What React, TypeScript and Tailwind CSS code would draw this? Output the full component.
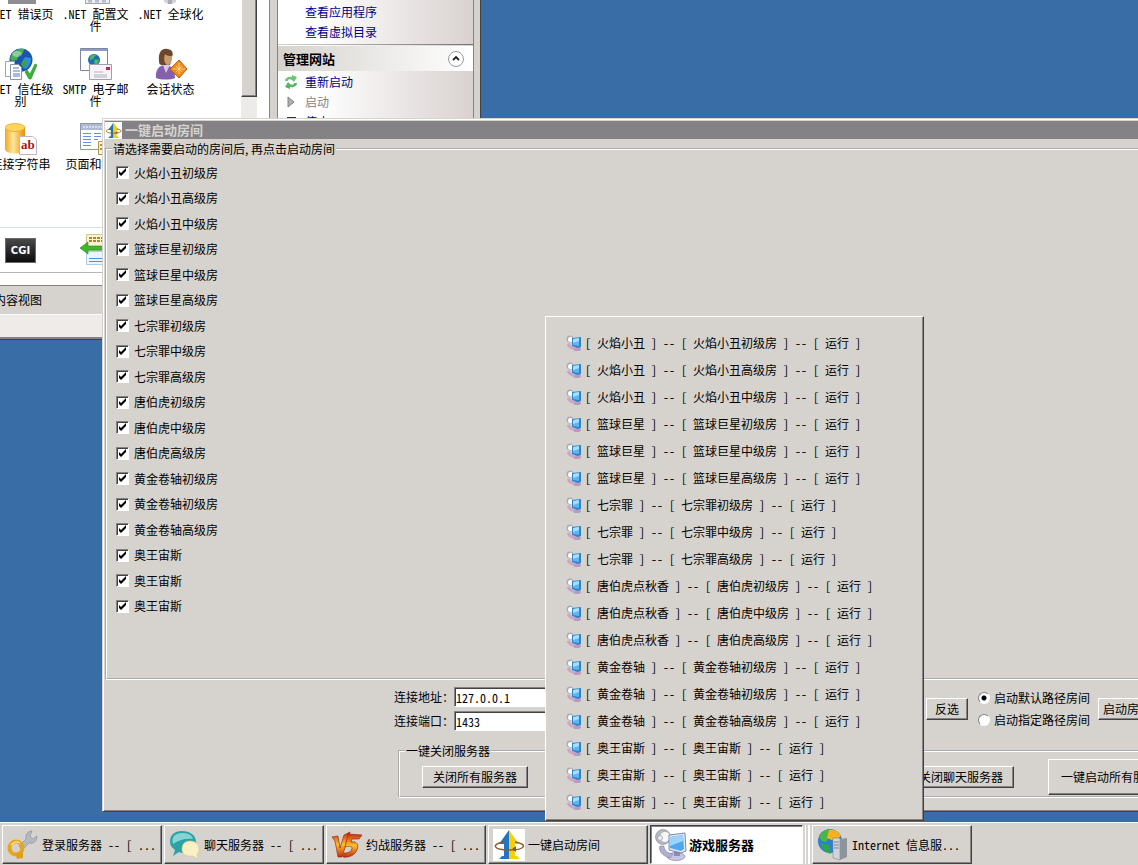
import React from "react";

const rooms = [
  "火焰小丑初级房",
  "火焰小丑高级房",
  "火焰小丑中级房",
  "篮球巨星初级房",
  "篮球巨星中级房",
  "篮球巨星高级房",
  "七宗罪初级房",
  "七宗罪中级房",
  "七宗罪高级房",
  "唐伯虎初级房",
  "唐伯虎中级房",
  "唐伯虎高级房",
  "黄金卷轴初级房",
  "黄金卷轴初级房",
  "黄金卷轴高级房",
  "奥王宙斯",
  "奥王宙斯",
  "奥王宙斯",
];

const running = [
  ["火焰小丑", "火焰小丑初级房"],
  ["火焰小丑", "火焰小丑高级房"],
  ["火焰小丑", "火焰小丑中级房"],
  ["篮球巨星", "篮球巨星初级房"],
  ["篮球巨星", "篮球巨星中级房"],
  ["篮球巨星", "篮球巨星高级房"],
  ["七宗罪", "七宗罪初级房"],
  ["七宗罪", "七宗罪中级房"],
  ["七宗罪", "七宗罪高级房"],
  ["唐伯虎点秋香", "唐伯虎初级房"],
  ["唐伯虎点秋香", "唐伯虎中级房"],
  ["唐伯虎点秋香", "唐伯虎高级房"],
  ["黄金卷轴", "黄金卷轴初级房"],
  ["黄金卷轴", "黄金卷轴初级房"],
  ["黄金卷轴", "黄金卷轴高级房"],
  ["奥王宙斯", "奥王宙斯"],
  ["奥王宙斯", "奥王宙斯"],
  ["奥王宙斯", "奥王宙斯"],
];

/* Icons */

const TrustIcon = () => (
  <svg viewBox="0 0 32 32" className="size-8">
    <circle cx="16" cy="12" r="11.500" fill="#1a56b0" />
    <path d="M8 5c3-4 8-5 11-4l-1 4-4 2-2 5-5 1-2-3z" fill="#47b04b" />
    <path d="M20 9l6 1c0 5-2 9-6 11l-3-4 1-5z" fill="#2f8fd6" />
    <path d="M18 12l4 1-1 5-3 2-2-4z" fill="#3d9f4a" />
    <ellipse cx="12" cy="6" rx="5" ry="3" fill="#fff" opacity=".4" />
    <path d="M.5 13.500h9v15h-9z" fill="#fff" stroke="#9ba4b5" />
    <path d="M5.500 16.500h8l3 3v12h-11z" fill="#fff" stroke="#8a94a8" />
    <path d="M8 20h6M8 23h7M8 26h7M8 28h7" stroke="#4a78c8" />
    <path d="M20 24l2-2 3 4 5-10 2 1-6 14h-2z" fill="#39b536" stroke="#1d8a1f" strokeWidth=".6" />
  </svg>
);

const MailIcon = () => (
  <svg viewBox="0 0 32 32" className="size-8">
    <path d="M.5.5h27v22H.5z" fill="#fff" stroke="#7d86a5" />
    <path d="M1 1h26v2H1z" fill="#8f9cc4" />
    <circle cx="14" cy="12" r="6" fill="#1f6cb8" />
    <path d="M10 9c2-3 5-3 6-2l-3 4-3 1zM15 11l4 1-2 5-3-2z" fill="#4cbb5a" />
    <path d="M9.500 16.500h22v15h-22z" fill="#f6f4f7" stroke="#a19db0" />
    <path d="M26 19h4v3h-4z" fill="#c02252" />
    <path d="M14 24h9M14 27h13M14 29h13" stroke="#b4aec0" />
  </svg>
);

const SessionIcon = () => (
  <svg viewBox="0 0 32 32" className="size-8">
    <path d="M1 30c-1-9 4-13 9-13s10 3 10 13c-4 2-14 2-19 0z" fill="#8560ae" />
    <path d="M8 17l3 8 4-8z" fill="#d7c7ea" />
    <path d="M4 13C3 3 8 0 12 1c5 0 7 4 5 8l-2 8H7c-2 0-3-1-3-4z" fill="#6b482c" />
    <path d="M10 6c2 2 5 2 7 2 0 5-1 9-4 9s-5-5-3-11z" fill="#c99b70" />
    <path d="M24 12l8 9-8 9-9-9z" fill="#f08a1b" stroke="#b85c08" />
    <path d="M24 15v11M18 21h12M21 18l6 6M27 18l-6 6" stroke="#ffdf9b" strokeWidth=".8" />
  </svg>
);

const DatabaseIcon = () => (
  <svg viewBox="0 0 32 32" className="size-8">
    <defs>
      <linearGradient id="db">
        <stop stopColor="#f3a51a" />
        <stop offset=".4" stopColor="#ffe79c" />
        <stop offset="1" stopColor="#e39009" />
      </linearGradient>
    </defs>
    <path d="M0 4v22c0 6 20 6 20 0V4z" fill="url(#db)" />
    <ellipse cx="10" cy="4.500" rx="10" ry="4" fill="#ffd45a" stroke="#e19a16" strokeWidth=".6" />
    <path d="M14.500 13.500h13l4 3v15h-17z" fill="#fff" stroke="#c3b4bb" />
    <text x="16" y="26" className="font-['Liberation_Serif',serif] text-[13px] font-bold" fill="#a01818">ab</text>
  </svg>
);

const PageIcon = () => (
  <svg viewBox="0 0 32 32" className="size-8">
    <path d="M.5.5h31v26H.5z" fill="#fff" stroke="#8b97ad" />
    <path d="M1 1h30v6H1z" fill="#aebbd2" />
    <path d="M3 4h20" stroke="#fff" strokeDasharray="2 1" />
    <path d="M3 10.500h8M3 13.500h8M3 16.500h8M3 19.500h8M3 22.500h8M14 10.500h7M14 13.500h7M14 16.500h4" stroke="#6b8fd4" />
    <path d="M18.500 18.500h13v13h-13z" fill="#fbf3d0" stroke="#b29245" />
    <path d="M20 22h6M20 26h6" stroke="#b29245" strokeWidth="2" />
  </svg>
);

const FilterIcon = () => (
  <svg viewBox="0 0 32 32" className="size-8">
    <path d="M6.500.5h25v16h-25z" fill="#fcf4cf" stroke="#d7c485" />
    <path d="M9 4h18M9 7h18" stroke="#a8863c" strokeWidth="2" strokeDasharray="3 1" />
    <path d="M6.500 17.500h25v13h-25z" fill="#eaf5ff" stroke="#a9cbea" />
    <path d="M9 24.500h20M9 27.500h20" stroke="#4f91d6" />
    <path d="M0 14l8-6v4h15v4H8v4z" fill="#41b52f" stroke="#228a1c" strokeWidth=".6" />
  </svg>
);

const SheetIcon = () => (
  <svg viewBox="0 0 32 32" className="size-8">
    <path d="M5.500 4.500h24v26h-24z" fill="#eceef2" stroke="#a0a3ad" />
    <path d="M8 28h4M15 28h4M22 28h4" stroke="#b9bdc9" strokeWidth="3" />
  </svg>
);

const PlateIcon = () => (
  <svg viewBox="0 0 32 32" className="size-8">
    <path d="M3 20h28v11H3z" fill="#8f8d93" />
  </svg>
);

const StandIcon = () => (
  <svg viewBox="0 0 32 32" className="size-8">
    <path d="M9 24h12v5l-4 2h-4l-4-2z" fill="#d3d2d8" />
    <path d="M13 24h4v7h-4z" fill="#adabb5" />
  </svg>
);

const RestartIcon = () => (
  <svg viewBox="0 0 16 16" className="size-4">
    <path d="M2 7c0-3 4-5 7-4V1l5 2-3 5-2-2C7 5 5 5 5 7z" fill="#6cc474" />
    <path d="M14 9c0 3-4 5-7 4v2l-5-2 3-5 2 2c2 1 4 1 4-1z" fill="#58b562" />
  </svg>
);

const ServerIcon = () => (
  <svg viewBox="0 0 32 32" className="size-8">
    <ellipse cx="21" cy="27.500" rx="9" ry="4" fill="#c9c5e6" stroke="#77739f" strokeWidth=".6" />
    <path d="M19 22h6v5h-6z" fill="#8f8bb8" />
    <path d="M5 17c-2 4 2 10 10 12l3-4c-6-1-9-4-9-8z" fill="#b3aed0" stroke="#8580a8" strokeWidth=".6" />
    <circle cx="8" cy="8" r="7.500" fill="#b4b8c1" stroke="#7f848f" strokeWidth=".6" />
    <circle cx="10" cy="8" r="5" fill="#f5f7fa" />
    <circle cx="5" cy="9" r="2.500" fill="#e9ebf0" stroke="#8c92a0" strokeWidth=".6" />
    <path d="M14 6l16-2 1 18-5 2-12-3z" fill="#dfe7f3" stroke="#5d7196" strokeWidth=".8" />
    <path d="M15 8l13-2 1 14-3 2-11-3z" fill="#52a7ea" />
    <path d="M15 8l13-2v6l-13 5z" fill="#9bd3fa" />
  </svg>
);

const RoomIcon = () => (
  <svg viewBox="0 0 16 16" className="size-4">
    <ellipse cx="11" cy="14" rx="4" ry="2" fill="#b79bc4" />
    <path d="M1 9c0 3 3 5 7 6l1-3c-3 0-5-2-5-4z" fill="#cba9c6" />
    <circle cx="4" cy="4" r="3.500" fill="#a7adba" />
    <circle cx="4.500" cy="4.500" r="2.500" fill="#fff" />
    <path d="M6 3l9-1v10l-3 1-6-2z" fill="#2f83c9" />
    <path d="M7 4l6-1v8l-6-1z" fill="#5fb6ee" />
    <path d="M7 4l6-1v3L7 8z" fill="#a9defb" />
  </svg>
);

const ArrowsIcon = ({ className }: { className: string }) => (
  <svg viewBox="0 0 32 32" className={className}>
    <path d="M0 0h32v32H0z" fill="#fff" />
    <path d="M16 1v29H6l3-3h2V15H6z" fill="#2376bd" />
    <path d="M16 1l10 14h-4v12h2l3 3H16z" fill="#f4cf13" />
    <path d="M10 13c-11 2-11 8 6 8s19-6 6-8" fill="none" stroke="#8a5a2a" strokeWidth="1.500" />
    <path d="M19 20l4-3v6z" fill="#8a5a2a" />
  </svg>
);

const WrenchIcon = () => (
  <svg viewBox="0 0 32 32" className="size-8">
    <path d="M12 17L19 10c-1-5 2-8 6-8l-2 5 3 3 4-3c0 6-4 8-8 7l-7 7z" fill="#b5b8bf" stroke="#858992" strokeWidth=".6" />
    <circle cx="9" cy="19" r="6.500" fill="none" stroke="#e6a61f" strokeWidth="4" />
    <path d="M8 24l8-1v6l-6 1z" fill="#e0a01b" />
    <path d="M4 16c2-3 6-4 9-2" fill="none" stroke="#ffe08a" strokeWidth="1.500" />
  </svg>
);

const ChatIcon = () => (
  <svg viewBox="0 0 32 32" className="size-8">
    <path d="M13 2c8 0 14 4 14 11s-6 11-14 11l-3-1-6 4 2-6c-3-2-5-5-5-8C1 6 5 2 13 2z" fill="#2ba3a5" />
    <path d="M13 4c6 0 10 2 11 6-8-1-14 1-20 5C2 8 6 4 13 4z" fill="#86d4d3" />
    <path d="M21 12c5 0 9 3 9 8 0 3-1 4-2 5l1 5-5-3c-7 1-11-2-11-7s3-8 8-8z" fill="#fbf0c4" stroke="#d9c78a" strokeWidth=".6" />
  </svg>
);

const VersusIcon = () => (
  <svg viewBox="0 0 32 32" className="size-8">
    <defs>
      <linearGradient id="fire" x2="0" y2="1">
        <stop stopColor="#c9300f" />
        <stop offset=".5" stopColor="#fbc02a" />
        <stop offset="1" stopColor="#c0300c" />
      </linearGradient>
    </defs>
    <path d="M1 8l6-1 2 12 4-13 6-3-8 25H7L4 12z" fill="url(#fire)" stroke="#8c1a0a" strokeWidth=".6" />
    <path d="M17 5l14 1-3 4h-7l-1 3c6-1 8 3 6 8-2 5-8 8-14 7l1-4c5 0 8-2 8-5 0-2-4-2-7-1z" fill="url(#fire)" stroke="#8c1a0a" strokeWidth=".6" />
  </svg>
);

const IisIcon = () => (
  <svg viewBox="0 0 32 32" className="size-8">
    <circle cx="13" cy="12" r="12" fill="#2f7fd0" />
    <path d="M2 8C5 1 10 0 15 1l-2 6-4 6-4-1z" fill="#49b54a" />
    <path d="M12 1c6-1 10 2 12 6l-7 5-7-3z" fill="#f7b21c" />
    <path d="M4 14l8 2 2 9C8 23 4 20 4 14z" fill="#2fa64d" />
    <path d="M16 9h7v22l-7-2z" fill="#cfd4da" stroke="#7e858e" strokeWidth=".6" />
    <path d="M23 10l7-1v19l-7 3z" fill="#8d949c" />
    <path d="M17 13h5M17 16h5M17 19h5" stroke="#7e858e" />
  </svg>
);

/* Shared controls */

interface PushButtonProps {
  children: React.ReactNode;
  className?: string;
}

const PushButton: React.FC<PushButtonProps> = ({ children, className = "" }) => (
  <button
    type="button"
    className={`shrink-0 whitespace-nowrap border border-t-white border-l-white border-r-[#424142] border-b-[#424142] shadow-[inset_-1px_-1px_0_#848284] ${className}`}
  >
    {children}
  </button>
);

const CheckItem = ({ id, label }: { id: string; label: string }) => (
  <li className="flex items-center gap-[5px] odd:h-[25px] even:h-[26px]">
    <span className="grid">
      <input
        id={id}
        type="checkbox"
        defaultChecked
        className="peer col-start-1 row-start-1 size-[13px] appearance-none border border-t-[#848284] border-l-[#848284] border-r-white border-b-white bg-white shadow-[inset_1px_1px_0_#424142]"
      />
      <svg viewBox="0 0 13 13" className="pointer-events-none invisible col-start-1 row-start-1 size-[13px] peer-checked:visible">
        <path d="M3 5l2 2 5-5v3L5 10 3 8z" fill="#000" />
      </svg>
    </span>
    <label htmlFor={id}>{label}</label>
  </li>
);

const RadioItem = ({ id, label, checked = false }: { id: string; label: string; checked?: boolean }) => (
  <div className="flex h-[22px] items-center gap-1">
    <input
      id={id}
      type="radio"
      name="path"
      defaultChecked={checked}
      className="size-3 appearance-none rounded-full border border-t-[#848284] border-l-[#848284] border-r-white border-b-white bg-white checked:bg-[radial-gradient(#000_2px,#fff_3px)]"
    />
    <label htmlFor={id} className="whitespace-nowrap">{label}</label>
  </div>
);

/* IIS manager, partly off the top left of the desktop */

const features = [
  { label: ".NET 错误页", icon: <PlateIcon /> },
  { label: ".NET 配置文件", icon: <SheetIcon /> },
  { label: ".NET 全球化", icon: <StandIcon /> },
  { label: ".NET 信任级别", icon: <TrustIcon /> },
  { label: "SMTP 电子邮件", icon: <MailIcon /> },
  { label: "会话状态", icon: <SessionIcon /> },
  { label: "连接字符串", icon: <DatabaseIcon /> },
  { label: "页面和控件", icon: <PageIcon /> },
];

const IisWindow = () => (
  <section className="absolute -top-[27px] -left-[17px] flex w-[498px] flex-col border-r border-b border-[#424142] bg-[#d6d3ce]">
    <div className="flex h-[312px]">
      <div className="flex w-[258px] flex-col bg-white">
        <ul className="grid grid-cols-[repeat(3,75px)] auto-rows-[75px]">
          {features.map((f) => (
            <li key={f.label} className="flex flex-col items-center gap-[3px]">
              {f.icon}
              <span className="w-[72px] text-center leading-3 break-all">{f.label}</span>
            </li>
          ))}
        </ul>
        <div className="mt-[29px] flex h-[46px] items-center gap-[44px] border-t border-b border-t-[#d2ddec] border-b-[#b8b5b1] pl-[22px]">
          <span className="flex h-[25px] w-[31px] items-center justify-center border border-[#6b6b6b] bg-linear-to-b from-[#4a4a4a] to-[#0d0d0d] font-['DejaVu_Sans',sans-serif] text-[10px] font-bold text-white">
            CGI
          </span>
          <FilterIcon />
        </div>
      </div>
      <div className="w-4 bg-[#ecebe8]">
        <div className="h-[124px] border-r border-b border-l border-r-[#424142] border-b-[#424142] border-l-white bg-[#d6d3ce] shadow-[inset_-1px_-1px_0_#848284]" />
      </div>
      <div className="w-[13px] border-r border-[#848284] bg-white" />
      <div className="w-2 border-r border-[#848284]" />
      <div className="flex w-[196px] flex-col border-r border-[#848284] bg-linear-to-r from-white from-20% to-[#d9d2d0] pt-[29px]">
        <a href="#apps" className="pl-[27px] leading-5 text-[#000084]">查看应用程序</a>
        <a href="#dirs" className="pl-[27px] leading-5 text-[#000084]">查看虚拟目录</a>
        <div className="mt-[2px] h-px bg-linear-to-r from-[#d6d3ce] to-[#737173]" />
        <div className="mt-px flex h-[25px] items-center justify-between bg-linear-to-r from-[#d6d3ce] to-white pr-[9px] pl-[5px]">
          <h2 className="text-[13px] font-bold">管理网站</h2>
          <button type="button" aria-label="折叠" className="flex size-4 items-center justify-center rounded-full border border-[#9a98a4] bg-white">
            <svg viewBox="0 0 10 10" className="size-[10px]">
              <path d="M2 6l3-3 3 3" fill="none" stroke="#222" strokeWidth="1.800" />
            </svg>
          </button>
        </div>
        <a href="#restart" className="mt-px flex items-center gap-[6px] pl-[5px] leading-5 text-[#000084]">
          <RestartIcon />
          重新启动
        </a>
        <span className="flex items-center gap-[6px] pl-[5px] leading-5 text-[#848284]">
          <svg viewBox="0 0 16 16" className="size-4">
            <path d="M5 3l6 5-6 5z" fill="#b0aeb0" stroke="#848284" />
          </svg>
          启动
        </span>
        <a href="#stop" className="flex items-center gap-[6px] pl-[5px] leading-5 text-[#000084]">
          <svg viewBox="0 0 16 16" className="size-4">
            <path d="M4 3h9v9H4z" fill="#303048" />
          </svg>
          停止
        </a>
      </div>
    </div>
    <div className="flex h-[29px] items-center border-t border-[#848284] pb-px pl-[11px]">内容视图</div>
    <div className="h-[25px] border-t border-b-2 border-t-white border-b-[#848284] bg-[#efebe8]" />
  </section>
);

/* Room launcher dialog */

const LauncherWindow = () => (
  <section className="absolute top-[118px] -right-[64px] left-[102px] border border-t-[#d6d3ce] border-l-[#d6d3ce] border-b-[#424142] bg-[#d6d3ce] pb-[13px] pl-[2px] shadow-[inset_1px_1px_0_#fff,inset_0_-1px_0_#848284]">
    <h1 className="mt-[2px] flex h-[18px] items-center gap-[3px] bg-[#848284] text-[13px] font-bold text-[#d6d3ce]">
      <ArrowsIcon className="size-[17px]" />
      一键启动房间
    </h1>
    <fieldset className="border-2 border-white px-[9px] pb-[59px] [border-style:groove]">
      <legend className="-ml-1 px-px font-['Noto_Sans_CJK_SC',sans-serif] leading-5">请选择需要启动的房间后, 再点击启动房间</legend>
      <ul className="mt-px">
        {rooms.map((room, i) => (
          <CheckItem key={i} id={`room-${i}`} label={room} />
        ))}
      </ul>
    </fieldset>
    <div className="mt-[7px] flex items-center pl-[289px]">
      <form className="grid w-[532px] shrink-0 grid-cols-[60px_200px] items-center gap-y-1">
        <label htmlFor="host">连接地址：</label>
        <input
          id="host"
          defaultValue="127.0.0.1"
          className="h-5 border border-t-[#848284] border-l-[#848284] border-r-white border-b-white bg-white px-px shadow-[inset_1px_1px_0_#424142]"
        />
        <label htmlFor="port">连接端口：</label>
        <input
          id="port"
          defaultValue="1433"
          className="h-5 border border-t-[#848284] border-l-[#848284] border-r-white border-b-white bg-white px-px shadow-[inset_1px_1px_0_#424142]"
        />
      </form>
      <PushButton className="h-[22px] w-[42px]">反选</PushButton>
      <div className="mr-2 ml-[10px]">
        <RadioItem id="path-default" label="启动默认路径房间" checked />
        <RadioItem id="path-custom" label="启动指定路径房间" />
      </div>
      <PushButton className="h-[22px] px-1">启动房间</PushButton>
    </div>
    <fieldset className="mt-[10px] ml-[293px] border-2 border-white px-[22px] [border-style:groove]">
      <legend className="-ml-[17px] px-px leading-5">一键关闭服务器</legend>
      <div className="-mt-[3px] flex h-[38px] items-center">
        <PushButton className="h-[22px] w-[106px]">关闭所有服务器</PushButton>
        <PushButton className="ml-[380px] h-[22px] w-[106px]">关闭聊天服务器</PushButton>
        <PushButton className="ml-[34px] h-9 px-3">一键启动所有服务器</PushButton>
      </div>
    </fieldset>
  </section>
);

/* Menu with the running rooms, opened over the dialog */

const RunningMenu = () => (
  <ul
    role="menu"
    className="absolute top-[316px] left-[545px] w-[379px] border border-t-white border-l-white border-r-[#424142] border-b-[#424142] bg-[#d6d3ce] pt-3 pb-[5px] shadow-[inset_-1px_-1px_0_#848284]"
  >
    {running.map(([game, room], i) => (
      <li key={i} role="none">
        <button type="button" role="menuitem" className="flex h-[27px] w-full items-center gap-[3px] pl-5 whitespace-pre">
          <RoomIcon />
          {`[ ${game} ] -- [ ${room} ] -- [ 运行 ]`}
        </button>
      </li>
    ))}
  </ul>
);

interface TaskButtonProps {
  icon: React.ReactNode;
  label: string;
  active?: boolean;
}

const TaskButton: React.FC<TaskButtonProps> = ({ icon, label, active = false }) => (
  <button
    type="button"
    className={`flex h-[39px] shrink-0 items-center whitespace-pre border ${
      active
        ? "w-[153px] gap-[2px] border-t-[#424142] border-l-[#424142] border-r-white border-b-white bg-white pl-1 text-[13px] font-bold shadow-[inset_1px_1px_0_#848284]"
        : "w-[160px] gap-[3px] border-t-white border-l-white border-r-[#424142] border-b-[#424142] pl-1 shadow-[inset_-1px_-1px_0_#848284]"
    }`}
  >
    {icon}
    {label}
  </button>
);

const Taskbar = () => (
  <nav className="relative flex h-[43px] items-center gap-[2px] border-t border-white bg-[#d6d3ce] pt-px pl-[2px]">
    <TaskButton icon={<WrenchIcon />} label="登录服务器 -- [ ..." />
    <TaskButton icon={<ChatIcon />} label="聊天服务器 -- [ ..." />
    <TaskButton icon={<VersusIcon />} label="约战服务器 -- [ ..." />
    <TaskButton icon={<ArrowsIcon className="size-8" />} label="一键启动房间" />
    <TaskButton icon={<ServerIcon />} label="游戏服务器" active />
    <div className="h-[39px] w-[5px] border-r-2 border-l border-white" />
    <TaskButton icon={<IisIcon />} label="Internet 信息服..." />
  </nav>
);

const App = () => {
  return (
    <div className="flex h-screen flex-col overflow-hidden bg-[#396da5] font-['Noto_Sans_Mono_CJK_SC','Noto_Sans_CJK_SC',monospace] text-[12px] text-black">
      <main className="relative flex-1 overflow-hidden">
        <IisWindow />
        <LauncherWindow />
        <RunningMenu />
      </main>
      <Taskbar />
    </div>
  );
};

export default App;
